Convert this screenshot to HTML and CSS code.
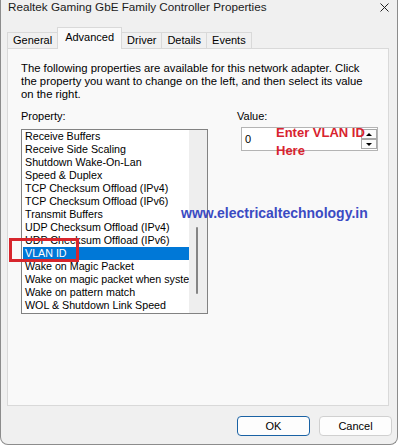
FILE: index.html
```html
<!DOCTYPE html>
<html lang="en">
<head>
    <meta charset="UTF-8">
    <meta name="viewport" content="width=device-width, initial-scale=1.0">
    <title>Realtek Gaming GbE Family Controller Properties</title>
    <link rel="stylesheet" href="styles.css">
</head>
<body>
    <div class="window">
        <div class="titlebar">
            <span class="title">Realtek Gaming GbE Family Controller Properties</span>
            <svg class="close" width="9" height="9" viewBox="0 0 9 9">
                <path d="M0.5 0.5 L8.5 8.5 M8.5 0.5 L0.5 8.5" stroke="#222" stroke-width="1" fill="none"/>
            </svg>
        </div>

        <div class="tabs">
            <div class="tab">General</div>
            <div class="tab active">Advanced</div>
            <div class="tab">Driver</div>
            <div class="tab">Details</div>
            <div class="tab">Events</div>
        </div>

        <div class="panel">
            <p class="desc">The following properties are available for this network adapter. Click<br>
            the property you want to change on the left, and then select its value<br>
            on the right.</p>

            <div class="fields">
                <div class="prop-col">
                    <div class="label">Property:</div>
                    <div class="listbox">
                        <ul class="items">
                            <li>Receive Buffers</li>
                            <li>Receive Side Scaling</li>
                            <li>Shutdown Wake-On-Lan</li>
                            <li>Speed &amp; Duplex</li>
                            <li>TCP Checksum Offload (IPv4)</li>
                            <li>TCP Checksum Offload (IPv6)</li>
                            <li>Transmit Buffers</li>
                            <li>UDP Checksum Offload (IPv4)</li>
                            <li>UDP Checksum Offload (IPv6)</li>
                            <li class="selected">VLAN ID</li>
                            <li>Wake on Magic Packet</li>
                            <li>Wake on magic packet when system is in the S0ix power state</li>
                            <li>Wake on pattern match</li>
                            <li>WOL &amp; Shutdown Link Speed</li>
                        </ul>
                        <div class="scrollbar"><div class="thumb"></div></div>
                    </div>
                </div>

                <div class="value-col">
                    <div class="label">Value:</div>
                    <div class="spin">
                        <div class="spin-value">0</div>
                        <div class="spin-arrows">
                            <div class="arrow up"></div>
                            <div class="arrow down"></div>
                        </div>
                    </div>
                </div>
            </div>
        </div>

        <div class="buttons">
            <button class="btn default">OK</button>
            <button class="btn">Cancel</button>
        </div>

        <!-- annotations on top of the screenshot -->
        <div class="note-box"></div>
        <div class="note-text">Enter VLAN ID<br>Here</div>
        <div class="watermark">www.electricaltechnology.in</div>
    </div>
</body>
</html>
```

FILE: styles.css
```css
body {
    margin: 0;
    background-color: #ffffff;
    font-family: "Liberation Sans", Arial, sans-serif;
    color: #000;
}
.window {
    position: relative;
    box-sizing: border-box;
    width: 398px;
    height: 445px;
    background-color: #f0f0f0;
    border: 1px solid #8c8c8c;
    border-top: none;
    border-radius: 0 0 8px 8px;
}
.titlebar {
    display: flex;
    justify-content: space-between;
    height: 27px;
    padding: 0 8px 0 7px;
    font-size: 11.7px;
    line-height: 14px;
    color: #1b1b1b;
}
.close {
    margin-top: 3px;
}
.tabs {
    display: flex;
    align-items: flex-end;
    height: 21px;
    padding-left: 6px;
}
.tab {
    box-sizing: border-box;
    height: 16px;
    line-height: 15px;
    padding: 0 5px;
    border: 1px solid #d9d9d9;
    border-bottom: none;
    margin-right: -1px;
    font-size: 11px;
    background-color: #f0f0f0;
}
.tab.active {
    position: relative;
    z-index: 1;
    height: 22px;
    line-height: 19px;
    margin-bottom: -1px;
    padding: 0 7px;
    background-color: #f9f9f9;
}
.panel {
    box-sizing: border-box;
    height: 358px;
    margin: 0 8px 0 6px;
    padding: 13px 0 0 13px;
    border: 1px solid #d9d9d9;
    background-color: #f9f9f9;
}
.desc {
    margin: 0;
    font-size: 11.3px;
    line-height: 13px;
}
.fields {
    display: flex;
    margin-top: 9px;
}
.label {
    font-size: 11px;
    line-height: 13px;
}
.prop-col .label {
    margin-bottom: 6px;
}
.value-col {
    margin-left: 29px;
}
.value-col .label {
    margin-bottom: 4px;
}
.listbox {
    box-sizing: border-box;
    display: flex;
    width: 187px;
    height: 185px;
    border: 1px solid #828282;
    background-color: #fff;
}
.items {
    flex: 1;
    min-width: 0;
    margin: 0;
    padding: 0 0 0 1px;
    list-style: none;
}
.items li {
    height: 13px;
    line-height: 13px;
    padding-left: 2px;
    font-size: 10.7px;
    white-space: nowrap;
    overflow: hidden;
}
.items li.selected {
    background-color: #0078d7;
    color: #fff;
}
.scrollbar {
    width: 18px;
    background-color: #eeeeee;
}
.thumb {
    width: 2px;
    height: 67px;
    margin: 97px 0 0 7px;
    border-radius: 1px;
    background-color: #858585;
}
.spin {
    box-sizing: border-box;
    display: flex;
    width: 137px;
    height: 24px;
    margin-left: 4px;
    border: 1px solid #b4b4b4;
    background-color: #fff;
}
.spin-value {
    flex: 1;
    padding-left: 3px;
    font-size: 11px;
    line-height: 22px;
}
.spin-arrows {
    display: flex;
    flex-direction: column;
    width: 16px;
    padding: 1px 0;
}
.arrow {
    position: relative;
    box-sizing: border-box;
    height: 10px;
    border: 1px solid #a8a8a8;
    background-color: #fbfbfb;
}
.arrow::after {
    content: "";
    position: absolute;
    left: 4px;
    top: 3px;
    border-left: 3px solid transparent;
    border-right: 3px solid transparent;
}
.arrow.up::after {
    border-bottom: 3px solid #000;
}
.arrow.down::after {
    border-top: 3px solid #000;
}
.buttons {
    display: flex;
    justify-content: flex-end;
    gap: 9px;
    margin-top: 10px;
    padding-right: 5px;
}
.btn {
    box-sizing: border-box;
    width: 73px;
    height: 20px;
    padding: 0;
    border: 1px solid #d0d0d0;
    border-radius: 4px;
    background-color: #fdfdfd;
    font-family: "Liberation Sans", Arial, sans-serif;
    font-size: 11px;
    color: #000;
}
.btn.default {
    border-color: #1a62a4;
}
.note-box {
    position: absolute;
    left: 8px;
    top: 238px;
    box-sizing: border-box;
    width: 70px;
    height: 24px;
    border: 3px solid #d7262d;
}
.note-text {
    position: absolute;
    left: 275px;
    top: 124px;
    font-size: 13px;
    font-weight: bold;
    line-height: 18px;
    color: #d8232f;
}
.watermark {
    position: absolute;
    left: 180px;
    top: 205px;
    font-size: 14px;
    font-weight: bold;
    line-height: 16px;
    color: #3b4bc3;
}
```
